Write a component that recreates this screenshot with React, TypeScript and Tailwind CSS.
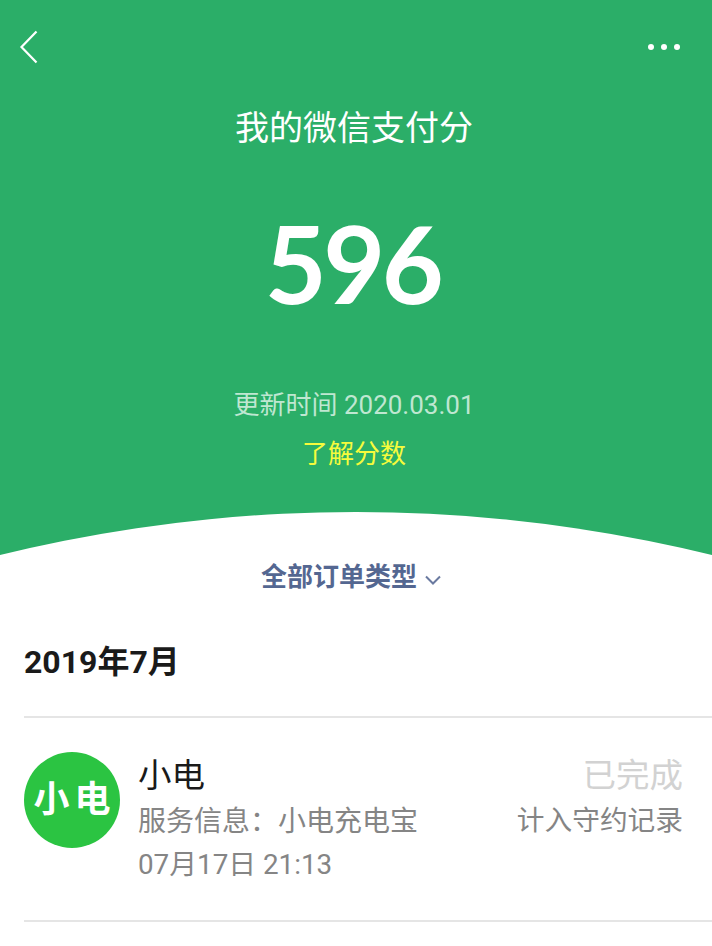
const CJK = 'font-["Roboto","Noto_Sans_CJK_SC",sans-serif]';

export default function App() {
  return (
    <div className={`relative h-[946px] w-[712px] overflow-hidden bg-white ${CJK}`}>
      {/* Green header with curved bottom */}
      <header className="relative h-[555px] overflow-hidden bg-[#2bae68] text-white">
        <div className="flex h-[94px] items-center justify-between pl-[19px] pr-[32px]">
          <svg width="20" height="34" viewBox="0 0 20 34" fill="none" stroke="currentColor" strokeWidth="2.2">
            <path d="M17.5 1.5 L2.5 17 L17.5 32.5" />
          </svg>
          <div className="flex gap-[7px]">
            <span className="h-[6px] w-[6px] rounded-full bg-white" />
            <span className="h-[6px] w-[6px] rounded-full bg-white" />
            <span className="h-[6px] w-[6px] rounded-full bg-white" />
          </div>
        </div>
        <div className="pr-[4px] text-center">
          <h1 className="mt-[10px] text-[34px] leading-[48px] font-normal">我的微信支付分</h1>
          <div className='mt-[41px] pr-[3px] font-["Lato",sans-serif] text-[107px] leading-[140px] font-bold tracking-[-3.5px]'>596</div>
          <p className="mt-[54px] text-[26px] leading-[36px] font-normal text-[#bfe7d1]">更新时间 2020.03.01</p>
          <p className="mt-[13px] text-[26px] leading-[36px] font-normal text-[#f6fb3c]">了解分数</p>
        </div>
        <div className="absolute top-[512px] left-[-1139px] h-[2990px] w-[2990px] rounded-full bg-white" />
      </header>

      <button className="mt-[2px] flex h-[40px] w-full items-center justify-center gap-[8px] pr-[10px] text-[26px] leading-[40px] font-bold text-[#546791]">
        全部订单类型
        <svg className="mt-[6px]" width="16" height="10" viewBox="0 0 16 10" fill="none" stroke="#6a7aa0" strokeWidth="2">
          <path d="M1 1.5 L8 8.5 L15 1.5" />
        </svg>
      </button>

      <h2 className="mt-[44px] pl-[24px] text-[32px] leading-[42px] font-bold text-[#1a1a1a]">2019年7月</h2>

      <section className="mt-[33px] ml-[24px] border-y-2 border-[#e5e5e5]">
        <div className="flex h-[202px] pt-[34px] pr-[29px]">
          <div className="flex h-[96px] w-[96px] shrink-0 items-center justify-center rounded-full bg-[#2bc442] text-[36px] font-bold tracking-[5px] text-white">
            <span className="pl-[5px]">小电</span>
          </div>
          <div className="ml-[18px] flex-1">
            <div className="text-[33.5px] leading-[48px] text-[#1a1a1a]">小电</div>
            <div className="mt-[2px] text-[28px] leading-[40px] font-normal text-[#858585]">服务信息：小电充电宝</div>
            <div className="mt-[3px] text-[27.8px] leading-[40px] text-[#858585]">07月17日 21:13</div>
          </div>
          <div className="text-right">
            <div className="text-[33.5px] leading-[48px] font-normal text-[#d2d2d2]">已完成</div>
            <div className="mt-[1px] text-[27.7px] leading-[40px] font-normal text-[#858585]">计入守约记录</div>
          </div>
        </div>
      </section>
    </div>
  );
}
